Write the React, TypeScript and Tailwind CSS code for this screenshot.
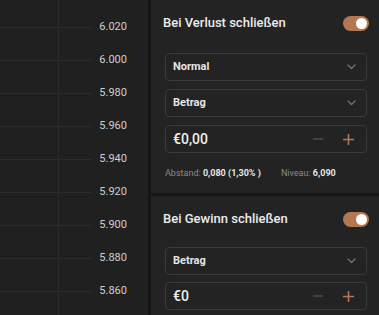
import React from 'react';

const prices = ['6.020', '6.000', '5.980', '5.960', '5.940', '5.920', '5.900', '5.880', '5.860'];

const Toggle = () => (
  <div className="w-[26px] h-[15px] rounded-full bg-[#b47752] flex items-center justify-end px-[2px]">
    <div className="w-[11px] h-[11px] rounded-full bg-white" />
  </div>
);

const Chevron = () => (
  <svg width="9" height="6" viewBox="0 0 9 6" fill="none">
    <path d="M1 1l3.5 3.5L8 1" stroke="#8c6a52" strokeWidth="1.3" strokeLinecap="round" strokeLinejoin="round" />
  </svg>
);

const SelectBox = ({ label }: { label: string }) => (
  <div className="h-[28px] border border-[#3a3a3a] rounded-[4px] flex items-center justify-between pl-[7px] pr-[10px]">
    <span className="text-[11px] font-bold text-[#e6e6e6]">{label}</span>
    <Chevron />
  </div>
);

const AmountInput = ({ value }: { value: string }) => (
  <div className="h-[28px] border border-[#3a3a3a] rounded-[4px] flex items-center justify-between pl-[7px] pr-[12px]">
    <span className="text-[14px] font-medium text-[#f0f0f0]">{value}</span>
    <div className="flex items-center gap-[20px]">
      <svg width="10" height="10" viewBox="0 0 10 10">
        <path d="M0 5h10" stroke="#4a4a4a" strokeWidth="1.6" />
      </svg>
      <svg width="11" height="11" viewBox="0 0 11 11">
        <path d="M0 5.5h11M5.5 0v11" stroke="#b47752" strokeWidth="1.6" />
      </svg>
    </div>
  </div>
);

const App = () => {
  return (
    <div
      className="w-[379px] h-[315px] overflow-hidden flex bg-[#202020]"
      style={{ fontFamily: 'Roboto, "Noto Sans", sans-serif' }}
    >
      {/* chart price scale */}
      <div className="relative w-[148px] shrink-0 bg-[#202020] pt-[11px]">
        <div className="absolute left-[58px] top-0 bottom-0 w-px bg-[#2c2c2c]" />
        {prices.map((p) => (
          <div key={p} className="h-[33px] flex items-center">
            <div className="w-[92px] h-px bg-[#2c2c2c]" />
            <span className="w-[35px] text-right text-[11px] text-[#cfcfcf]">{p}</span>
          </div>
        ))}
      </div>
      <div className="w-[3px] shrink-0 bg-[#151515]" />

      {/* right panel */}
      <div className="flex-1 flex flex-col bg-[#232323]">
        <div className="h-[193px] pl-[12px] pr-[10px] pt-[15px]">
          <div className="flex items-center justify-between h-[16px]">
            <span className="text-[13px] font-medium text-[#ececec]">Bei Verlust schließen</span>
            <Toggle />
          </div>
          <div className="pl-[2px] pr-[2px] mt-[22px] flex flex-col gap-[8px]">
            <SelectBox label="Normal" />
            <SelectBox label="Betrag" />
            <AmountInput value="€0,00" />
          </div>
          <div className="pl-[2px] mt-[14px] flex items-center gap-[20px] text-[9px]">
            <span>
              <span className="text-[#8a8a8a]">Abstand: </span>
              <span className="font-bold text-[#e6e6e6]">0,080 (1,30% )</span>
            </span>
            <span>
              <span className="text-[#8a8a8a]">Niveau: </span>
              <span className="font-bold text-[#e6e6e6]">6,090</span>
            </span>
          </div>
        </div>
        <div className="h-[3px] bg-[#151515]" />
        <div className="flex-1 pl-[12px] pr-[10px] pt-[15px]">
          <div className="flex items-center justify-between h-[16px]">
            <span className="text-[13px] font-medium text-[#ececec]">Bei Gewinn schließen</span>
            <Toggle />
          </div>
          <div className="pl-[2px] pr-[2px] mt-[20px] flex flex-col gap-[7px]">
            <SelectBox label="Betrag" />
            <AmountInput value="€0" />
          </div>
        </div>
      </div>
    </div>
  );
};

export default App;
